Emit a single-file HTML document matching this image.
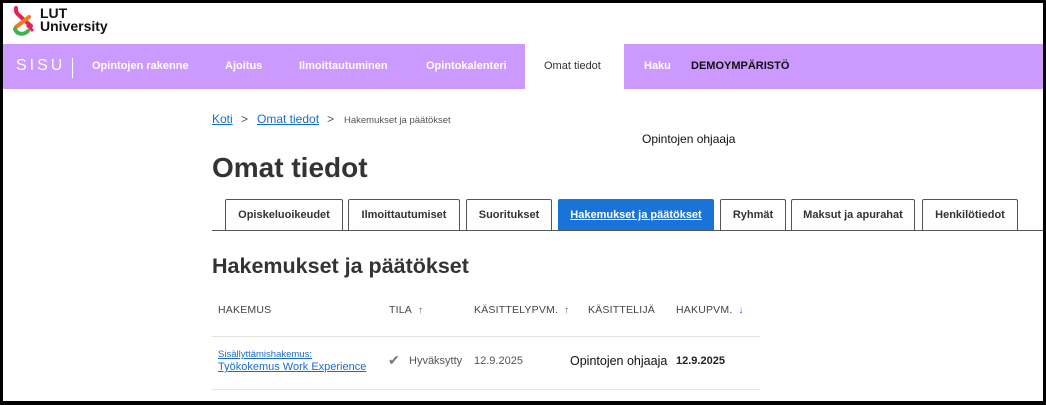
<!DOCTYPE html>
<html><head><meta charset="utf-8"><style>
*{margin:0;padding:0;box-sizing:border-box}
body{width:1046px;height:405px;background:#000;position:relative;overflow:hidden;font-family:"Liberation Sans",sans-serif;color:#333}
.page{position:absolute;left:3px;top:3px;width:1040px;height:398px;background:#fff;overflow:hidden}
.a{position:absolute;white-space:nowrap}
.nav{position:absolute;left:0;top:41px;width:1040px;height:45px;background:#cc99ff}
.nav .a{color:#fff;font-size:11px;top:16px;font-weight:bold}
.tab{position:absolute;top:196px;height:32px;border:1px solid #555;border-bottom:none;border-radius:2px 2px 0 0;background:#fff;font-size:11px;font-weight:bold;color:#333;text-align:center;line-height:30px}
.th{position:absolute;top:301px;font-size:10.5px;color:#444;letter-spacing:.2px}
.arr{color:#555;font-size:10px;margin-left:6px}
</style></head><body><div class="page">
<svg class="a" style="left:7px;top:2px" width="26" height="32" viewBox="0 0 26 32">
<path d="M6 3 C5 8 9 10 12 13 L21 21" stroke="#e8224f" stroke-width="4" fill="none" stroke-linecap="round"/>
<path d="M19 12 L6 22" stroke="#f47a20" stroke-width="4" fill="none" stroke-linecap="round"/>
<path d="M5 24 C7 30 14 30 18 26" stroke="#3cb54a" stroke-width="4" fill="none" stroke-linecap="round"/>
<path d="M17 20 L23 26" stroke="#e8224f" stroke-width="3" fill="none"/>
</svg>
<div class="a" style="left:37px;top:4px;font-size:14px;font-weight:bold;color:#111;line-height:13px">LUT<br>University</div>
<div class="nav">
<div class="a" style="left:13px;top:13px;font-size:16px;font-weight:normal;letter-spacing:3px">SISU</div>
<div style="position:absolute;left:69px;top:14px;width:1px;height:20px;background:#fff"></div>
<div class="a" style="left:89px">Opintojen rakenne</div>
<div class="a" style="left:222px">Ajoitus</div>
<div class="a" style="left:296px">Ilmoittautuminen</div>
<div class="a" style="left:423px">Opintokalenteri</div>
<div style="position:absolute;left:522px;top:0;width:99px;height:45px;background:#fff"></div>
<div class="a" style="left:541px;color:#333;font-weight:normal">Omat tiedot</div>
<div class="a" style="left:641px">Haku</div>
<div class="a" style="left:688px;color:#111">DEMOYMPÄRISTÖ</div>
</div>
<div class="a" style="left:209px;top:109px;font-size:12px;color:#1a6bd1;text-decoration:underline">Koti</div>
<div class="a" style="left:238px;top:109px;font-size:12px;color:#555">&gt;</div>
<div class="a" style="left:254px;top:109px;font-size:12px;color:#1a6bd1;text-decoration:underline">Omat tiedot</div>
<div class="a" style="left:324px;top:109px;font-size:12px;color:#555">&gt;</div>
<div class="a" style="left:341px;top:112px;font-size:9.5px;color:#555">Hakemukset ja päätökset</div>
<div class="a" style="left:639px;top:129px;font-size:12px;color:#111">Opintojen ohjaaja</div>
<div class="a" style="left:209px;top:149px;font-size:28px;font-weight:bold;color:#333">Omat tiedot</div>
<div class="tab" style="left:222px;width:118px">Opiskeluoikeudet</div>
<div class="tab" style="left:345px;width:112px">Ilmoittautumiset</div>
<div class="tab" style="left:463px;width:86px">Suoritukset</div>
<div class="tab" style="left:555px;width:156px;background:#1a73d9;border-color:#1a73d9;color:#fff;text-decoration:underline">Hakemukset ja päätökset</div>
<div class="tab" style="left:717px;width:66px">Ryhmät</div>
<div class="tab" style="left:788px;width:124px">Maksut ja apurahat</div>
<div class="tab" style="left:919px;width:96px">Henkilötiedot</div>
<div style="position:absolute;left:209px;top:227px;width:831px;height:1px;background:#555"></div>
<div class="a" style="left:209px;top:251px;font-size:21.5px;font-weight:bold;color:#333">Hakemukset ja päätökset</div>
<div class="th" style="left:215px">HAKEMUS</div>
<div class="th" style="left:386px">TILA<span class="arr">↑</span></div>
<div class="th" style="left:471px">KÄSITTELYPVM.<span class="arr">↑</span></div>
<div class="th" style="left:585px">KÄSITTELIJÄ</div>
<div class="th" style="left:673px">HAKUPVM.<span class="arr" style="color:#1a6bd1">↓</span></div>
<div style="position:absolute;left:209px;top:333px;width:548px;height:1px;background:#e4e4e4"></div>
<div class="a" style="left:215px;top:346px;font-size:9.5px;color:#1a6bd1;text-decoration:underline">Sisällyttämishakemus:</div>
<div class="a" style="left:215px;top:358px;font-size:11px;color:#1a6bd1;text-decoration:underline">Työkokemus Work Experience</div>
<div class="a" style="left:385px;top:349px;font-size:14px;color:#777">✔</div>
<div class="a" style="left:406px;top:352px;font-size:11px;color:#555">Hyväksytty</div>
<div class="a" style="left:471px;top:352px;font-size:11px;color:#555">12.9.2025</div>
<div class="a" style="left:567px;top:351px;font-size:12.5px;color:#111">Opintojen ohjaaja</div>
<div class="a" style="left:673px;top:352px;font-size:11px;font-weight:bold;color:#222">12.9.2025</div>
<div style="position:absolute;left:209px;top:386px;width:548px;height:1px;background:#e4e4e4"></div>
</div></body></html>
